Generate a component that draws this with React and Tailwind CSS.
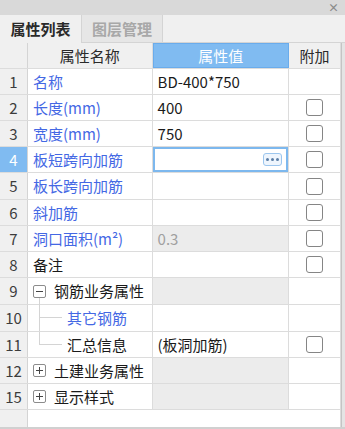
import React from 'react';

const rows = [
  { n: '1', name: '名称', color: 'blue', value: 'BD-400*750', h: 'h-[26px]' },
  { n: '2', name: '长度(mm)', color: 'blue', value: '400', check: true, h: 'h-[26px]' },
  { n: '3', name: '宽度(mm)', color: 'blue', value: '750', check: true, h: 'h-[26px]' },
  { n: '4', name: '板短跨向加筋', color: 'blue', selected: true, check: true, h: 'h-[26px]' },
  { n: '5', name: '板长跨向加筋', color: 'blue', check: true, h: 'h-[27px]' },
  { n: '6', name: '斜加筋', color: 'blue', check: true, h: 'h-[26px]' },
  { n: '7', name: '洞口面积(m²)', color: 'blue', value: '0.3', disabled: true, check: true, h: 'h-[26px]' },
  { n: '8', name: '备注', check: true, h: 'h-[26px]' },
  { n: '9', name: '钢筋业务属性', tree: 'minus', group: true, h: 'h-[27px]' },
  { n: '10', name: '其它钢筋', color: 'blue', tree: 'mid', h: 'h-[27px]' },
  { n: '11', name: '汇总信息', tree: 'last', value: '(板洞加筋)', check: true, h: 'h-[26px]' },
  { n: '12', name: '土建业务属性', tree: 'plus', group: true, h: 'h-[26px]' },
  { n: '15', name: '显示样式', tree: 'plus', group: true, h: 'h-[26px]' },
];

const ExpandBox = ({ sign, line }) => (
  <span className="relative w-[13px] h-[13px] border border-[#8c8c8c] rounded-[2px] bg-white flex items-center justify-center shrink-0">
    <span className="w-[7px] h-[1px] bg-[#444]" />
    {sign === '+' && <span className="absolute w-[1px] h-[7px] bg-[#444]" />}
    {line && <span className="absolute left-[5px] top-[12px] w-[1px] h-[14px] bg-[#d4d4d4]" />}
  </span>
);

const CheckBox = () => (
  <span className="w-[17px] h-[17px] border border-[#858585] rounded-[3px] bg-white" />
);

const NameCell = ({ row }) => {
  const textColor = row.color === 'blue' ? 'text-[#4468e4]' : 'text-[#1a1a1a]';
  if (row.tree === 'minus' || row.tree === 'plus') {
    return (
      <div className="w-[125px] h-full border-r border-[#dcdcdc] flex items-center pl-[5px] gap-[8px] bg-white">
        <ExpandBox sign={row.tree === 'minus' ? '-' : '+'} line={row.tree === 'minus'} />
        <span className={textColor}>{row.name}</span>
      </div>
    );
  }
  if (row.tree === 'mid' || row.tree === 'last') {
    return (
      <div className="w-[125px] h-full border-r border-[#dcdcdc] flex items-center bg-white">
        <div className="ml-[11px] w-[23px] h-full flex flex-col">
          <div className="h-1/2 border-l border-b border-[#d4d4d4]" />
          <div className={row.tree === 'mid' ? 'h-1/2 border-l border-[#d4d4d4]' : 'h-1/2'} />
        </div>
        <span className={'ml-[5px] ' + textColor}>{row.name}</span>
      </div>
    );
  }
  return (
    <div className="w-[125px] h-full border-r border-[#dcdcdc] flex items-center pl-[5px] bg-white">
      <span className={textColor}>{row.name}</span>
    </div>
  );
};

const ValueCell = ({ row }) => {
  if (row.selected) {
    return (
      <div className="w-[137px] h-full border-r border-[#dcdcdc] bg-white">
        <div className="h-full border-2 border-[#7db8ee] flex items-center justify-end pr-[4px]">
          <span className="w-[19px] h-[13px] rounded-[3px] border border-[#9cc6ee] bg-[#eef5fd] flex items-center justify-center gap-[2px]">
            <span className="w-[3px] h-[3px] rounded-full bg-[#5b7ea6]" />
            <span className="w-[3px] h-[3px] rounded-full bg-[#5b7ea6]" />
            <span className="w-[3px] h-[3px] rounded-full bg-[#5b7ea6]" />
          </span>
        </div>
      </div>
    );
  }
  const bg = row.disabled || row.group ? 'bg-[#ececec]' : 'bg-white';
  const color = row.disabled ? 'text-[#a0a0a0]' : 'text-[#1a1a1a]';
  return (
    <div className={'w-[137px] h-full border-r border-[#dcdcdc] flex items-center pl-[5px] ' + bg}>
      <span className={color}>{row.value}</span>
    </div>
  );
};

export default function App() {
  return (
    <div
      className="w-[345px] h-[429px] overflow-hidden flex flex-col bg-[#f0f0f0] text-[15px] leading-[20px]"
      style={{ fontFamily: '"Microsoft YaHei", "Noto Sans CJK SC", "Noto Sans", sans-serif' }}
    >
      {/* title strip */}
      <div className="h-[15px] bg-[#d9d9d9] flex items-center justify-end pr-[6px]">
        <span className="text-[11px] leading-[11px] font-bold text-[#8a8a8a]">×</span>
      </div>

      {/* tabs */}
      <div className="h-[28px] flex bg-[#f0f0f0]">
        <div className="w-[82px] border-r border-[#d4d4d4] flex items-center justify-center font-bold text-[#2a2a2a]">
          属性列表
        </div>
        <div className="w-[81px] bg-[#e6e6e6] border-r border-b border-[#d4d4d4] flex items-center justify-center font-bold text-[#a8a8a8]">
          图层管理
        </div>
        <div className="flex-1 border-b border-[#d4d4d4]" />
      </div>

      <div className="flex-1 flex">
        <div className="w-[341px] flex flex-col border-r border-[#dcdcdc]">
          {/* header */}
          <div className="h-[26px] flex border-b border-[#dcdcdc] bg-[#f0f0f0]">
            <div className="w-[28px] border-r border-[#d4d4d4]" />
            <div className="w-[125px] border-r border-[#dcdcdc] flex items-center justify-center text-[#2a2a2a]">
              属性名称
            </div>
            <div className="w-[137px] bg-[#80bbf1] border border-[#6aacec] flex items-center justify-center text-white">
              属性值
            </div>
            <div className="w-[51px] flex items-center justify-center text-[#2a2a2a]">附加</div>
          </div>

          {rows.map((row) => (
            <div key={row.n} className={'flex border-b border-[#dcdcdc] ' + row.h}>
              <div
                className={
                  'w-[28px] h-full border-r border-[#d4d4d4] flex items-center justify-center ' +
                  (row.selected ? 'bg-[#80bbf1] text-white' : 'bg-[#f0f0f0] text-[#3c3c3c]')
                }
              >
                {row.n}
              </div>
              <NameCell row={row} />
              <ValueCell row={row} />
              <div className="w-[51px] h-full flex items-center justify-center bg-white">
                {row.check && <CheckBox />}
              </div>
            </div>
          ))}

          <div className="flex-1 flex">
            <div className="w-[28px] bg-[#f0f0f0] border-r border-[#d4d4d4]" />
            <div className="flex-1 bg-white" />
          </div>
        </div>
        <div className="flex-1 bg-[#e4e4e4] border-l border-[#c4c4c4]" />
      </div>
      <div className="h-[2px] bg-[#d0d0d0]" />
    </div>
  );
}
